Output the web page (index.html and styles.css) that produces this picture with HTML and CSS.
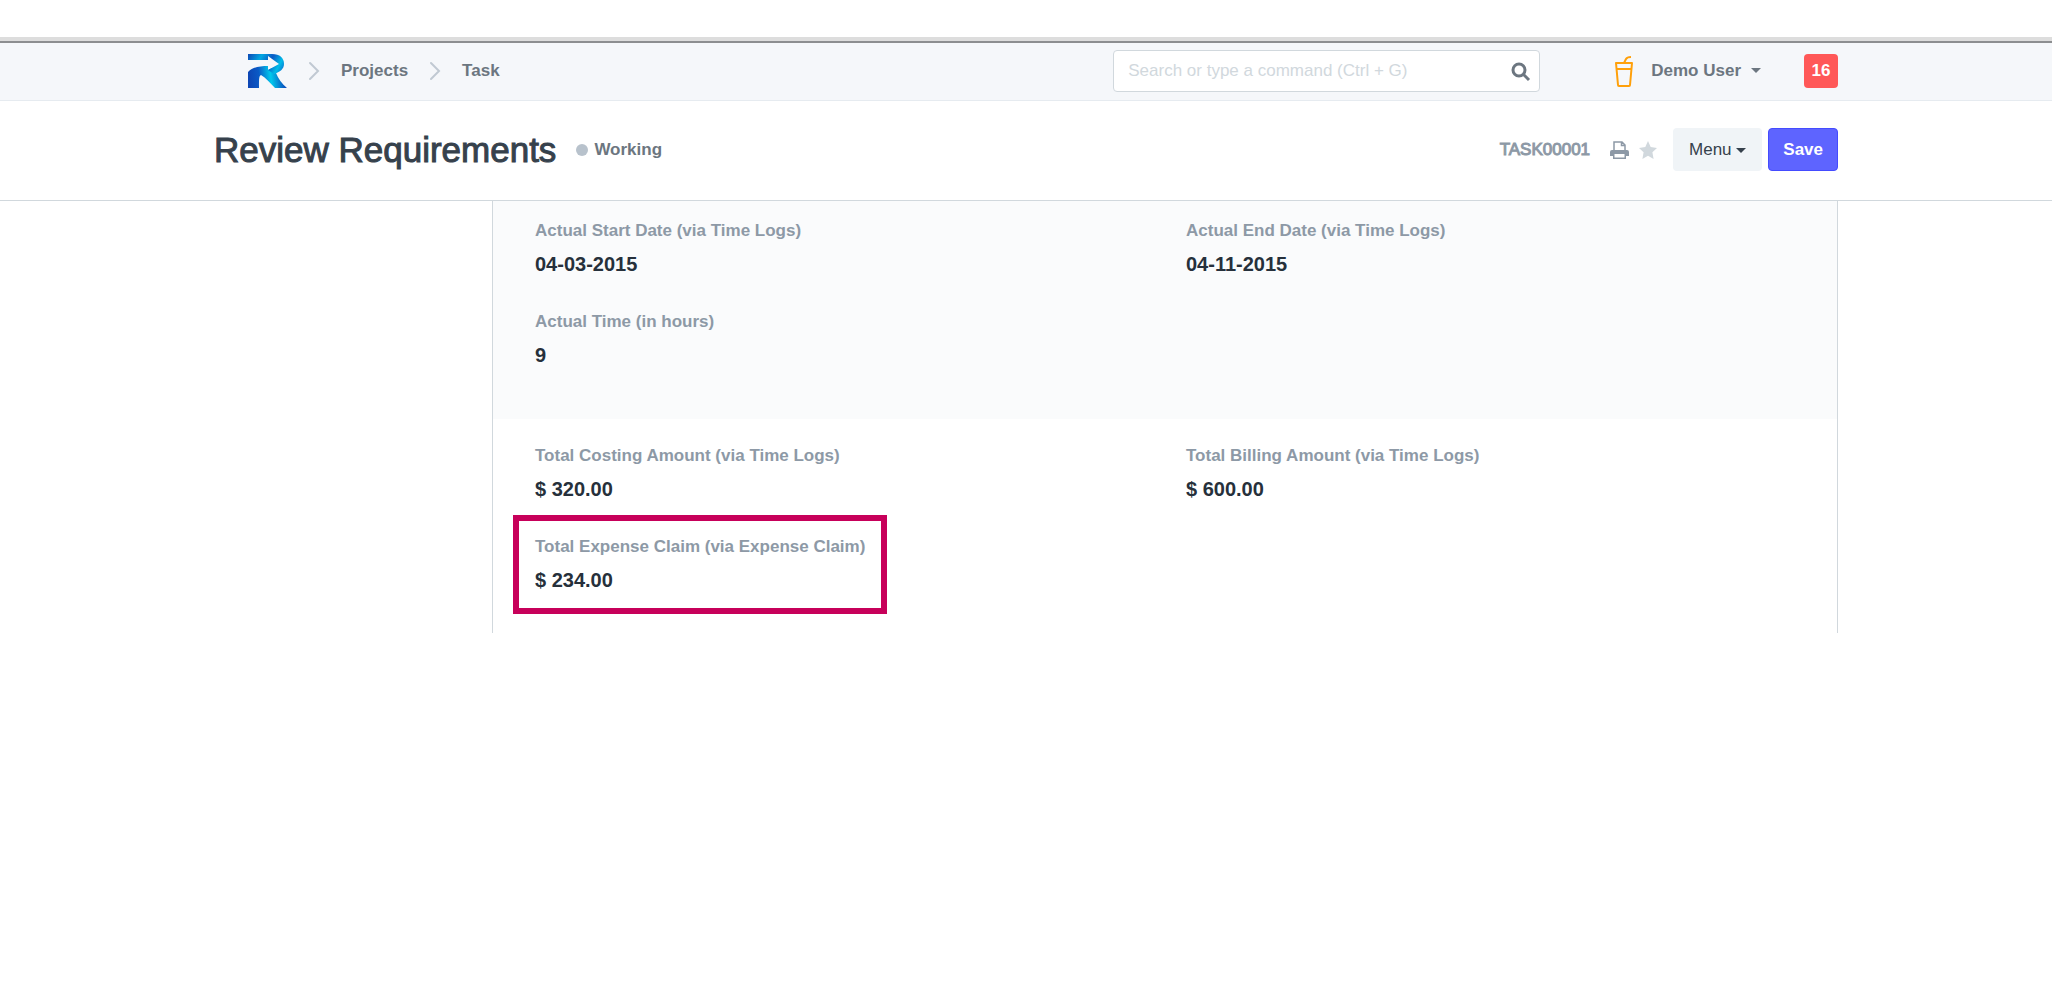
FILE: index.html
```html
<!DOCTYPE html>
<html lang="en">
<head>
<meta charset="utf-8">
<title>Review Requirements</title>
<link rel="stylesheet" href="styles.css">
</head>
<body>
<header class="navbar">
  <div class="container navbar-row">
    <nav class="breadcrumbs" aria-label="Breadcrumb">
      <a class="brand" href="#" aria-label="Home">
        <svg width="39" height="34" viewBox="0 0 39 34">
          <defs>
            <linearGradient id="bowl" gradientUnits="userSpaceOnUse" x1="0" y1="0" x2="34" y2="18">
              <stop offset="0" stop-color="#0d47b5"/><stop offset=".33" stop-color="#00a8e2"/><stop offset=".6" stop-color="#0a58c4"/><stop offset=".85" stop-color="#00bce8"/><stop offset="1" stop-color="#0a7ad4"/>
            </linearGradient>
            <linearGradient id="leg" gradientUnits="userSpaceOnUse" x1="2" y1="28" x2="36" y2="24">
              <stop offset="0" stop-color="#0d47b5"/><stop offset=".28" stop-color="#0a5ac6"/><stop offset=".62" stop-color="#00c8ec"/><stop offset="1" stop-color="#0a50be"/>
            </linearGradient>
          </defs>
          <path fill="url(#leg)" d="M0 18C5 13 12 12 20 12V16L24 14L28 19C30 24 34 30 39 34H27C22 29 18 24 13 21C11 22 11 24 11 34H0Z"/>
          <path fill="url(#bowl)" d="M0 0H24C32 0 36 4 36 10C36 15 32 18 26 20L20 16L31 10L20 2V6H0Z"/>
        </svg>
      </a>
      <svg class="chevron" width="12" height="20" viewBox="0 0 12 20"><path d="M2 2L10 10L2 18"/></svg>
      <a href="#">Projects</a>
      <svg class="chevron" width="12" height="20" viewBox="0 0 12 20"><path d="M2 2L10 10L2 18"/></svg>
      <a href="#">Task</a>
    </nav>
    <div class="nav-tools">
      <div class="search">
        <input type="text" aria-label="Search" placeholder="Search or type a command (Ctrl + G)">
        <svg width="20" height="20" viewBox="0 0 20 20"><circle cx="8" cy="8" r="6"/><path d="M12 12L18 18"/></svg>
      </div>
      <button class="user" type="button">
        <svg class="cup" width="18" height="32" viewBox="0 0 18 32"><path d="M1 8H17L15 30Q15 31 14 31H4Q3 31 3 30ZM2 14H16M9 8L11 4Q12 2 16 2"/></svg>
        Demo User
        <span class="caret"></span>
      </button>
      <button class="badge" type="button">16</button>
    </div>
  </div>
</header>
<div class="page-head">
  <div class="container page-head-row">
    <h1>Review Requirements</h1>
    <span class="status">Working</span>
    <div class="actions">
      <span class="doc-id">TASK00001</span>
      <a class="icon" href="#" aria-label="Print">
        <svg width="19" height="18" viewBox="0 0 19 18"><path fill="none" stroke="#8d99a6" stroke-width="1.500" d="M4 9V1H12L15 4V9M11.500 1V4.500H15"/><path fill="#8d99a6" fill-rule="evenodd" d="M2 9H17Q19 9 19 11V15H16V18H3V15H0V11Q0 9 2 9ZM4.500 13V16.500H14.500V13Z"/></svg>
      </a>
      <a class="icon star" href="#" aria-label="Favorite">
        <svg width="18" height="18" viewBox="0 0 18 18"><path fill="#d1d8dd" d="M9 0L11.700 6L18 6.900L13.400 11.300L14.600 18L9 14.700L3.400 18L4.600 11.300L0 6.900L6.300 6Z"/></svg>
      </a>
      <button class="btn" type="button">Menu <span class="caret"></span></button>
      <button class="btn btn-primary" type="button">Save</button>
    </div>
  </div>
</div>
<main class="container">
  <div class="form">
    <section class="section section-shaded">
      <dl class="field"><dt>Actual Start Date (via Time Logs)</dt><dd>04-03-2015</dd></dl>
      <dl class="field"><dt>Actual End Date (via Time Logs)</dt><dd>04-11-2015</dd></dl>
      <dl class="field"><dt>Actual Time (in hours)</dt><dd>9</dd></dl>
    </section>
    <section class="section">
      <dl class="field"><dt>Total Costing Amount (via Time Logs)</dt><dd>$ 320.00</dd></dl>
      <dl class="field"><dt>Total Billing Amount (via Time Logs)</dt><dd>$ 600.00</dd></dl>
      <dl class="field field-marked"><dt>Total Expense Claim (via Expense Claim)</dt><dd>$ 234.00</dd></dl>
    </section>
  </div>
</main>
</body>
</html>
```
FILE: styles.css
```css
* { box-sizing: border-box; }

body {
  margin: 0;
  padding-top: 37px;
  background: #fff;
  color: #36414c;
  font: 17px/24px "Liberation Sans", Arial, sans-serif;
}

a { color: inherit; text-decoration: none; }
svg { display: block; flex: none; }
button { font: inherit; color: inherit; border: 0; padding: 0; background: none; }

.container { max-width: 1624px; margin: 0 auto; }

/* Top bar */
.navbar {
  border-top: 4px solid #ddd;
  border-bottom: 1px solid #e6ebf0;
  background: #f5f7fa;
  color: #6c7680;
  font-weight: bold;
}
.navbar::before { content: ""; display: block; height: 2px; background: #8c8e90; }
.navbar-row { display: flex; justify-content: space-between; align-items: center; height: 57px; padding-bottom: 2px; }
.breadcrumbs { display: flex; align-items: center; gap: 21px; padding-left: 34px; }
.chevron { fill: none; stroke: #c0c9d2; stroke-width: 2; stroke-linecap: round; }

.nav-tools { display: flex; align-items: center; }
.search { position: relative; width: 427px; margin-right: 75px; }
.search input {
  display: block;
  width: 100%;
  height: 42px;
  padding: 0 44px 0 14px;
  border: 1px solid #d1d8dd;
  border-radius: 4px;
  background: #fff;
  font: inherit;
  font-weight: normal;
}
.search input::placeholder { color: #d1d8dd; opacity: 1; }
.search svg { position: absolute; right: 9px; top: 12px; fill: none; stroke: #6c7680; stroke-width: 3; }

.user { display: flex; align-items: center; margin-right: 43px; }
.cup { margin-right: 18px; fill: none; stroke: #ffa00a; stroke-width: 2; stroke-linejoin: round; }
.caret {
  display: inline-block;
  border: 5px solid transparent;
  border-top-color: currentColor;
  border-bottom: 0;
  vertical-align: middle;
}
.user .caret { margin-left: 10px; }
.badge { width: 34px; height: 34px; border-radius: 4px; background: #ff5858; color: #fff; }

/* Title bar */
.page-head { border-bottom: 1px solid #d1d8dd; }
.page-head-row { display: flex; align-items: center; height: 99px; padding-bottom: 2px; }
h1 { margin: 0; font-size: 35px; line-height: 40px; font-weight: normal; -webkit-text-stroke: 1px; }
.status { display: flex; align-items: center; gap: 6px; margin-left: 20px; color: #6c7680; font-weight: bold; }
.status::before { content: ""; width: 12px; height: 12px; border-radius: 50%; background: #b8c2cc; }
.actions { display: flex; align-items: center; margin-left: auto; }
.doc-id { color: #8d99a6; margin-right: 20px; -webkit-text-stroke: 1px; }
.star { margin: 0 16px 0 10px; }
.btn { height: 43px; padding: 0 16px; border-radius: 4px; background: #f0f4f7; }
.btn-primary { margin-left: 6px; padding: 0 14px; border: 1px solid #444bff; background: #5e64ff; color: #fff; font-weight: bold; }

/* Form body */
.form { margin-left: 278px; border: solid #d1d8dd; border-width: 0 1px; }
.section {
  display: grid;
  grid-template-columns: 1fr 1fr;
  column-gap: 42px;
  row-gap: 25px;
  padding: 24px 42px 33px;
}
.section-shaded { padding: 17px 42px 44px; background: #fafbfc; }
.field { margin: 0; justify-self: start; }
.field dt { color: #8d99a6; font-weight: bold; line-height: 26px; }
.field dd { margin: 0; color: #26303b; font-size: 20px; line-height: 40px; font-weight: bold; }

/* Callout frame drawn over the grid around one field */
.field-marked { position: relative; }
.field-marked::after {
  content: "";
  position: absolute;
  inset: -19px -22px -14px;
  border: 6px solid #c7005a;
}
```
